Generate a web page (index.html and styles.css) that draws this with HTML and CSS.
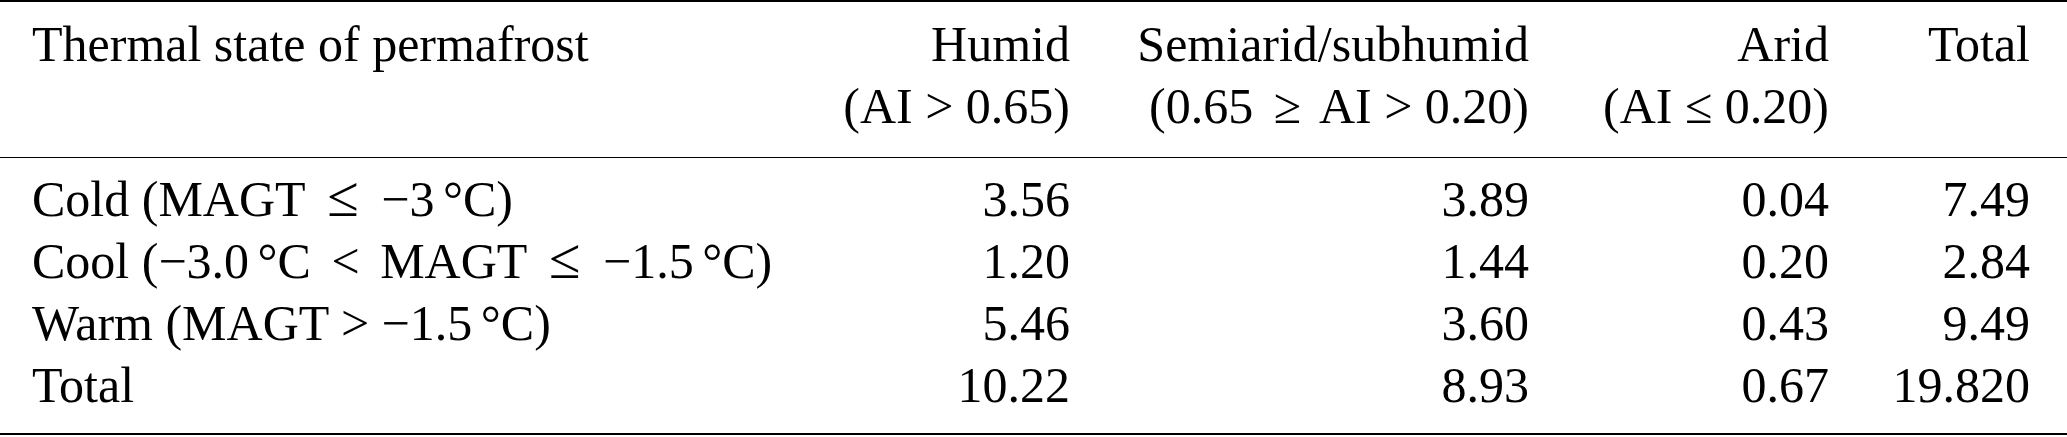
FILE: index.html
```html
<!DOCTYPE html>
<html>
<head>
  <title>Thermal state of permafrost by aridity zone</title>
  <meta charset="UTF-8">
  <link rel="stylesheet" href="styles.css">
</head>
<body>
  <table class="data">
    <colgroup>
      <col class="c-label">
      <col class="c-humid">
      <col class="c-semi">
      <col class="c-arid">
      <col class="c-total">
    </colgroup>
    <thead>
      <tr>
        <th>Thermal state of permafrost</th>
        <th>Humid<br>(AI &gt; 0.65)</th>
        <th>Semiarid/subhumid<br>(0.65 <span class="rel">&ge;</span> AI &gt; 0.20)</th>
        <th>Arid<br>(AI &le; 0.20)</th>
        <th>Total<br>&nbsp;</th>
      </tr>
    </thead>
    <tbody>
      <tr>
        <td>Cold (MAGT <span class="rel wide">&le;</span> &minus;3 <span class="deg">&deg;</span>C)</td>
        <td>3.56</td><td>3.89</td><td>0.04</td><td>7.49</td>
      </tr>
      <tr>
        <td>Cool (&minus;3.0 <span class="deg">&deg;</span>C <span class="rel">&lt;</span> MAGT <span class="rel wide">&le;</span> &minus;1.5 <span class="deg">&deg;</span>C)</td>
        <td>1.20</td><td>1.44</td><td>0.20</td><td>2.84</td>
      </tr>
      <tr>
        <td>Warm (MAGT &gt; &minus;1.5 <span class="deg">&deg;</span>C)</td>
        <td>5.46</td><td>3.60</td><td>0.43</td><td>9.49</td>
      </tr>
      <tr>
        <td>Total</td>
        <td>10.22</td><td>8.93</td><td>0.67</td><td>19.820</td>
      </tr>
    </tbody>
  </table>
</body>
</html>
```

FILE: styles.css
```css
body{
  margin:0;
  background:#fff;
  color:#000;
  font-family:"Liberation Serif","Times New Roman",serif;
}
.data{
  width:2067px;
  table-layout:fixed;
  border-collapse:separate;
  border-spacing:0;
  font-size:50px;
  line-height:62px;
}
.c-label{width:800px;}
.c-humid{width:270px;}
.c-semi{width:459px;}
.c-arid{width:300px;}
.c-total{width:238px;}

.data th,
.data td{
  font-weight:normal;
  text-align:right;
  vertical-align:top;
  white-space:nowrap;
  padding:0;
}
.data th:first-child,
.data td:first-child{
  text-align:left;
  padding-left:32px;
}
.data th:last-child,
.data td:last-child{
  padding-right:37px;
}
.data thead th{
  border-top:2px solid #000;
  border-bottom:1px solid #000;
  padding-top:11px;
  padding-bottom:20px;
}
.data tbody tr:first-child td{
  padding-top:10px;
}
.data tbody tr:last-child td{
  padding-bottom:17px;
  border-bottom:2px solid #000;
}

/* math-style spacing round relations and the degree sign */
.rel{margin:0 8px;}
.rel.wide{margin:0 10px;font-size:1.15em;line-height:0;}
.deg{margin-left:-4px;}
```
